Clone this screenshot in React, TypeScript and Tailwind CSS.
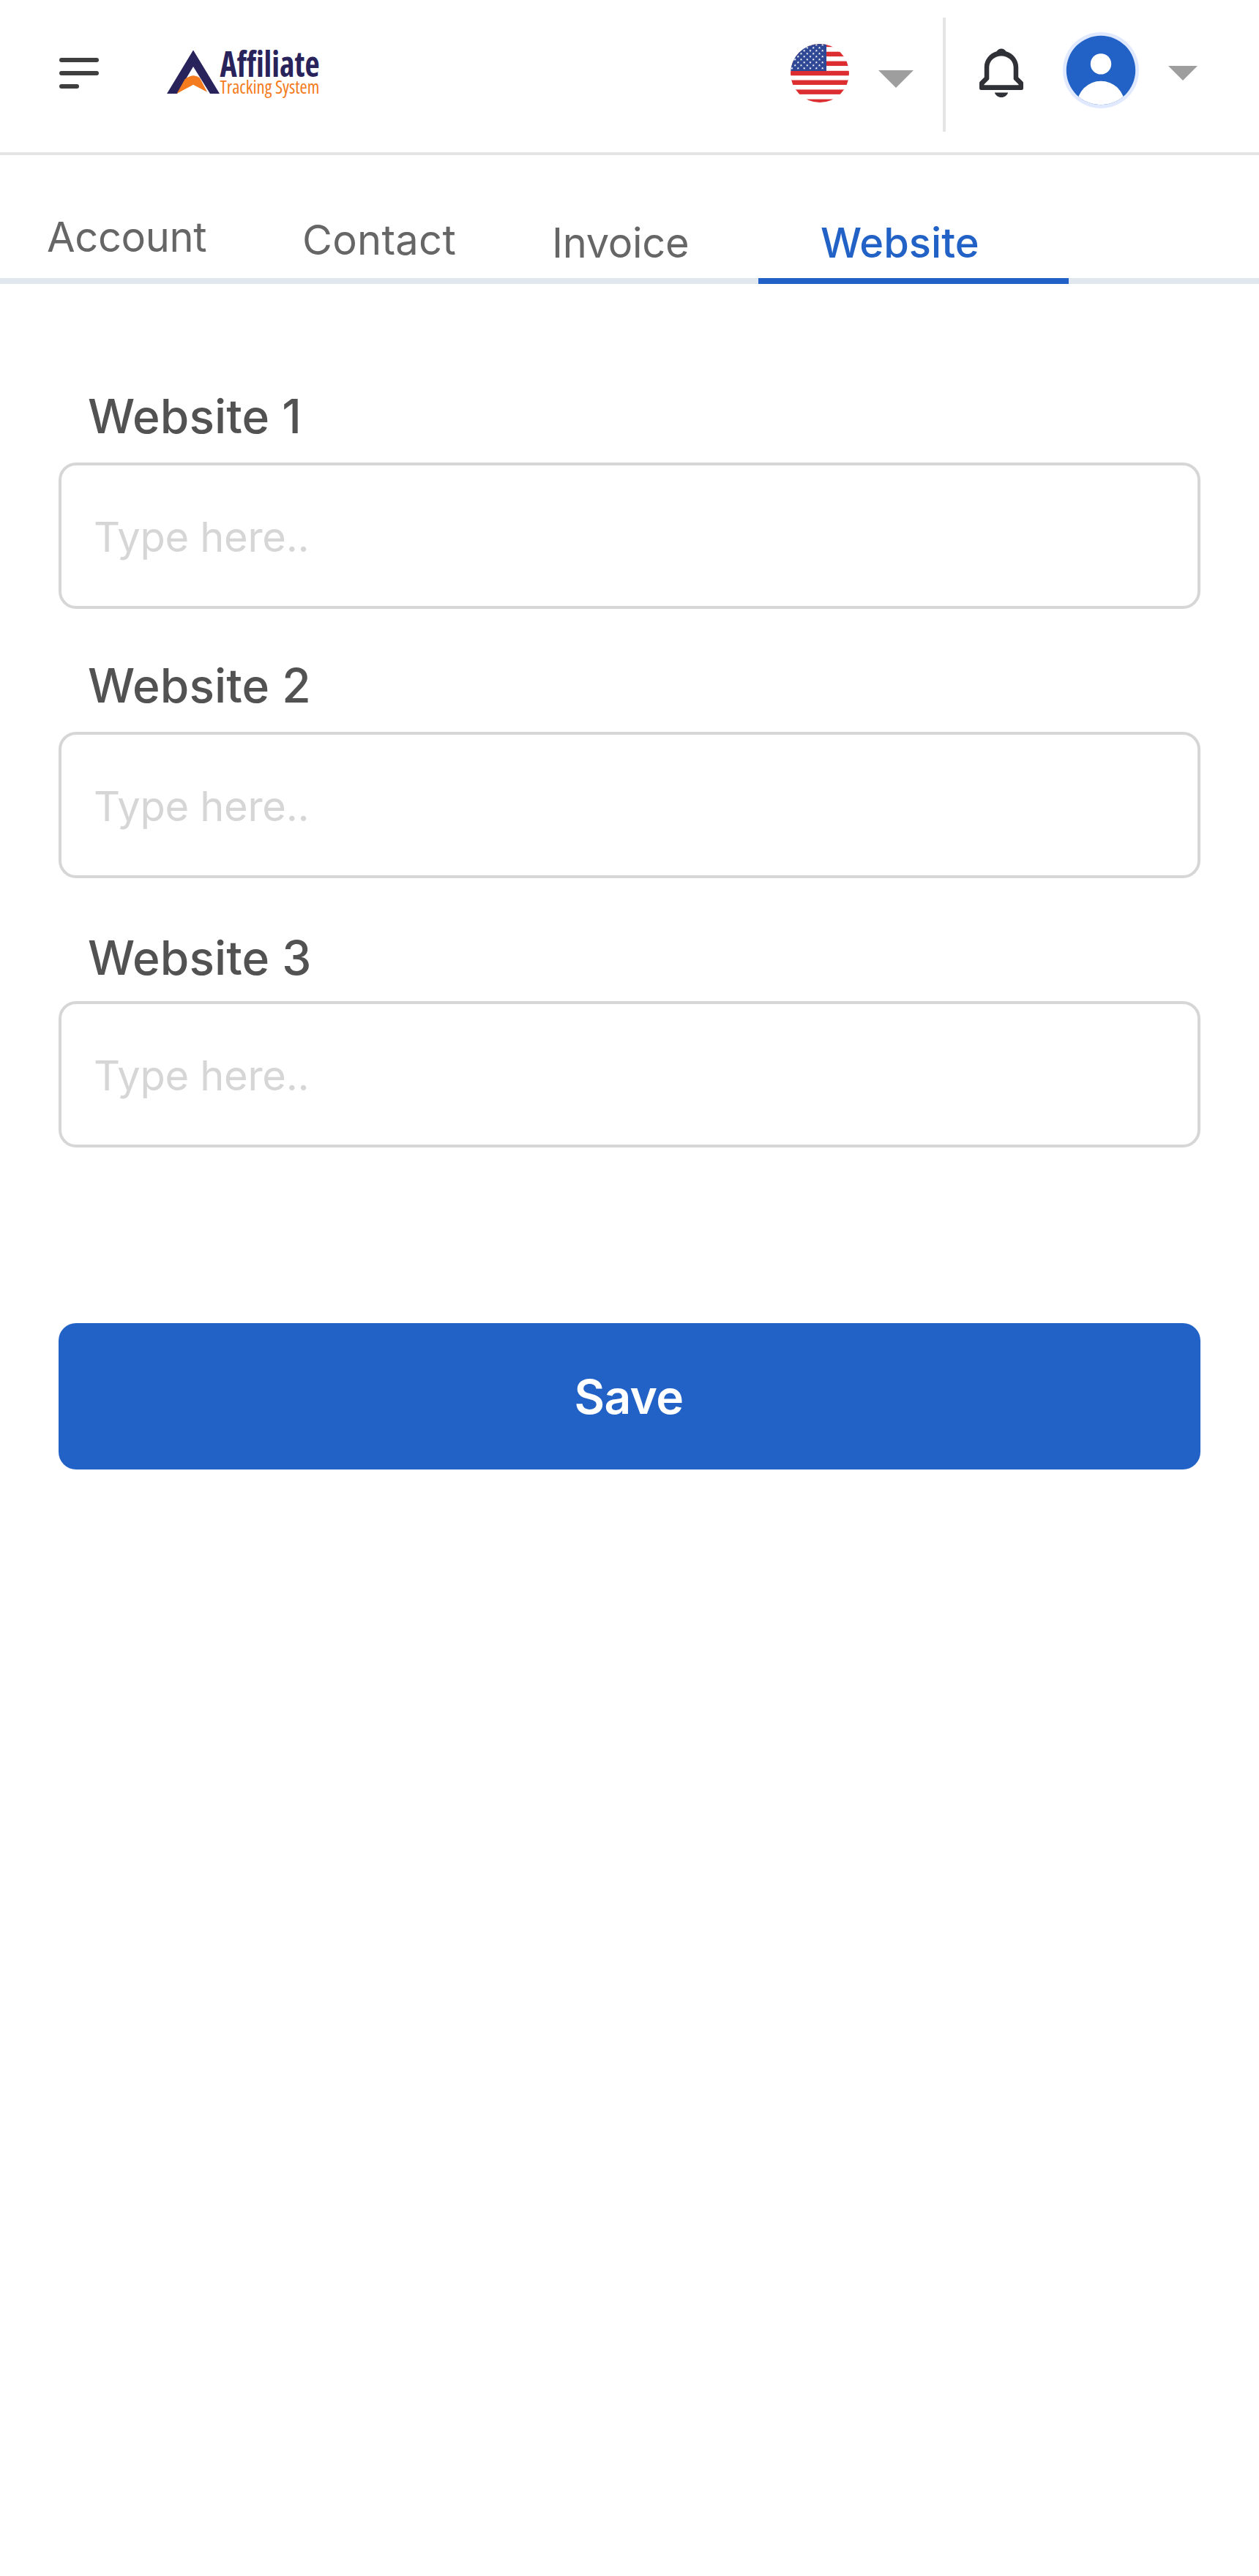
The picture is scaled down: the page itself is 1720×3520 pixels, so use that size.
import React from "react";

function MenuIcon() {
  return (
    <svg width="54" height="42" viewBox="0 0 54 42" fill="none" stroke="#3f3f3f" strokeWidth="6" strokeLinecap="round">
      <path d="M3 3H51M3 21H51M3 39H24" />
    </svg>
  );
}

function Logo() {
  return (
    <svg width="212" height="104" viewBox="0 -16 212 104" className="overflow-visible">
      <path d="M36 0.5L72 60H59L36 23L14 60H0Z" fill="#29235c" />
      <path d="M13.5 60L24.7 40Q28 37.5 33 35.7Q36 34.8 39 35.7Q42.5 36.5 45 38.5L55 57.7L36 47.7Z" fill="#f47b20" />
      <text
        x="72.5"
        y="36.7"
        className="font-['Open_Sans'] text-[49px] font-bold [font-stretch:75%]"
        fill="#29235c"
        textLength="136"
        lengthAdjust="spacingAndGlyphs"
      >
        Affiliate
      </text>
      <text
        x="72.5"
        y="60"
        className="font-['Open_Sans'] text-[26px] font-medium [font-stretch:75%]"
        fill="#f47b20"
        textLength="136"
        lengthAdjust="spacingAndGlyphs"
      >
        Tracking System
      </text>
    </svg>
  );
}

const STRIPES = [-2.3, 10.7, 23.6, 36.8, 49.5, 62.4, 75.6];
const STAR_ROWS = [1.3, 5.3, 9.3, 13.3, 17.3, 21.3, 25.3, 29.3, 33.3];
const LONG_ROW = [2, 10.3, 18.7, 27, 35.3, 43.7];
const SHORT_ROW = [6.2, 14.5, 22.8, 31.2, 39.5];

function Flag() {
  return (
    <svg width="80" height="80" viewBox="0 0 80 80">
      <defs>
        <clipPath id="flag-round">
          <circle cx="40" cy="40" r="40" />
        </clipPath>
        <path id="star" d="M0 -1.8L.5 -.6L1.8 -.55L.8 .3L1.1 1.5L0 .8L-1.1 1.5L-.8 .3L-1.8 -.55L-.5 -.6Z" fill="#fff" />
      </defs>
      <g clipPath="url(#flag-round)">
        <rect width="80" height="80" fill="#fff" />
        {STRIPES.map((y) => (
          <rect key={y} x="0" y={y} width="80" height="6.46" fill="#dc2d30" />
        ))}
        <rect width="49" height="37" fill="#2f4896" />
        {STAR_ROWS.map((y, row) =>
          (row % 2 === 0 ? LONG_ROW : SHORT_ROW).map((x) => <use key={`${x}-${y}`} href="#star" x={x} y={y} />),
        )}
      </g>
    </svg>
  );
}

function Bell() {
  return (
    <svg width="60" height="68" viewBox="0 0 60 68" fill="#303136">
      <path
        fillRule="evenodd"
        d="M23.5 4.3C25 2 27.3 .4 30 .4C32.7 .4 35 2 36.5 4.3C46 7 53.2 15.5 53.2 26V39.5L59 45.2Q60 46.2 60 47.5V54.5Q60 57 57.5 57H2.5Q0 57 0 54.5V47.5Q0 46.2 1 45.2L6.8 39.5V26C6.8 15.5 14 7 23.5 4.3ZM30 10.5C20.5 10.5 13.3 17.5 13.3 26V41.5Q13.3 42.5 12.5 43.3L6.5 49.3V50.2H53.5V49.3L47.5 43.3Q46.7 42.5 46.7 41.5V26C46.7 17.5 39.5 10.5 30 10.5Z"
      />
      <path d="M20.8 60.5H39.2C37.8 64.5 34.3 67 30 67C25.7 67 22.2 64.5 20.8 60.5Z" />
    </svg>
  );
}

function Avatar() {
  return (
    <svg width="104" height="104" viewBox="0 0 104 104">
      <defs>
        <clipPath id="avatar-round">
          <circle cx="52" cy="52" r="47.2" />
        </clipPath>
      </defs>
      <circle cx="52" cy="52" r="52" fill="#e1e9ff" />
      <g clipPath="url(#avatar-round)">
        <rect width="104" height="104" fill="#2262c6" />
        <circle cx="52" cy="43.4" r="14.2" fill="#fff" />
        <circle cx="52" cy="99.3" r="32.6" fill="#fff" />
      </g>
    </svg>
  );
}

function Caret({ width, height }: { width: number; height: number }) {
  return (
    <svg width={width} height={height} viewBox="0 0 48 24" preserveAspectRatio="none">
      <path d="M0 0H48L24 24Z" fill="#9e9e9e" />
    </svg>
  );
}

function Field({ label, className }: { label: string; className: string }) {
  return (
    <label className="flex flex-col">
      <span className={`flex h-[78px] items-center pl-10 text-[64px] leading-[78px] font-medium tracking-[0.1px] text-[#525252] ${className}`}>
        {label}
      </span>
      <input
        className="h-[200px] w-full rounded-[24px] border-4 border-[#d6d6d6] bg-white px-11 pt-1 text-[56px] tracking-[-0.3px] outline-none placeholder:text-[#d6d6d6] placeholder:opacity-100"
        placeholder="Type here.."
      />
    </label>
  );
}

export default function App() {
  return (
    <div className="min-h-[3520px] w-[1720px] bg-white font-['Inter',sans-serif]">
      <header className="flex h-[212px] items-start border-b-4 border-[#e5e5e5]">
        <button className="mt-[79px] ml-[81px]" aria-label="Menu">
          <MenuIcon />
        </button>
        <div className="mt-[52px] ml-[93px]">
          <Logo />
        </div>
        <button className="mt-[60px] ml-[640px] flex items-start gap-10">
          <Flag />
          <span className="mt-9">
            <Caret width={48} height={24} />
          </span>
        </button>
        <div className="mt-6 ml-10 h-[156px] w-1 bg-[#e5e5e5]" />
        <button className="mt-[66px] ml-[46px]" aria-label="Notifications">
          <Bell />
        </button>
        <button className="mt-11 ml-[54px] flex items-start gap-10">
          <Avatar />
          <span className="mt-[46px]">
            <Caret width={40} height={20} />
          </span>
        </button>
      </header>

      <nav className="flex h-[176px] items-start border-b-8 border-[#e1e7ef] text-[56px] leading-[68px] text-[#666666]">
        <a className="mt-[78px] ml-16 w-[349px] tracking-[-0.35px]">Account</a>
        <a className="mt-[82px] w-[341px] tracking-[0.3px]">Contact</a>
        <a className="mt-[86px] w-[282px] tracking-[-0.3px]">Invoice</a>
        <a className="h-[176px] w-[424px] border-b-8 border-[#2262c6] pt-[86px] pl-[85px] font-medium text-[#2262c6]">
          Website
        </a>
      </nav>

      <main className="flex flex-col px-20">
        <Field label="Website 1" className="mt-[142px] mb-[24px]" />
        <Field label="Website 2" className="mt-[66px] mb-[24px]" />
        <Field label="Website 3" className="mt-[70px] mb-[20px]" />
        <button className="mt-[240px] h-[200px] rounded-[24px] bg-[#2262c6] pt-0.5 pr-0.5 text-[64px] font-semibold tracking-[-0.6px] text-white">
          Save
        </button>
      </main>
    </div>
  );
}
